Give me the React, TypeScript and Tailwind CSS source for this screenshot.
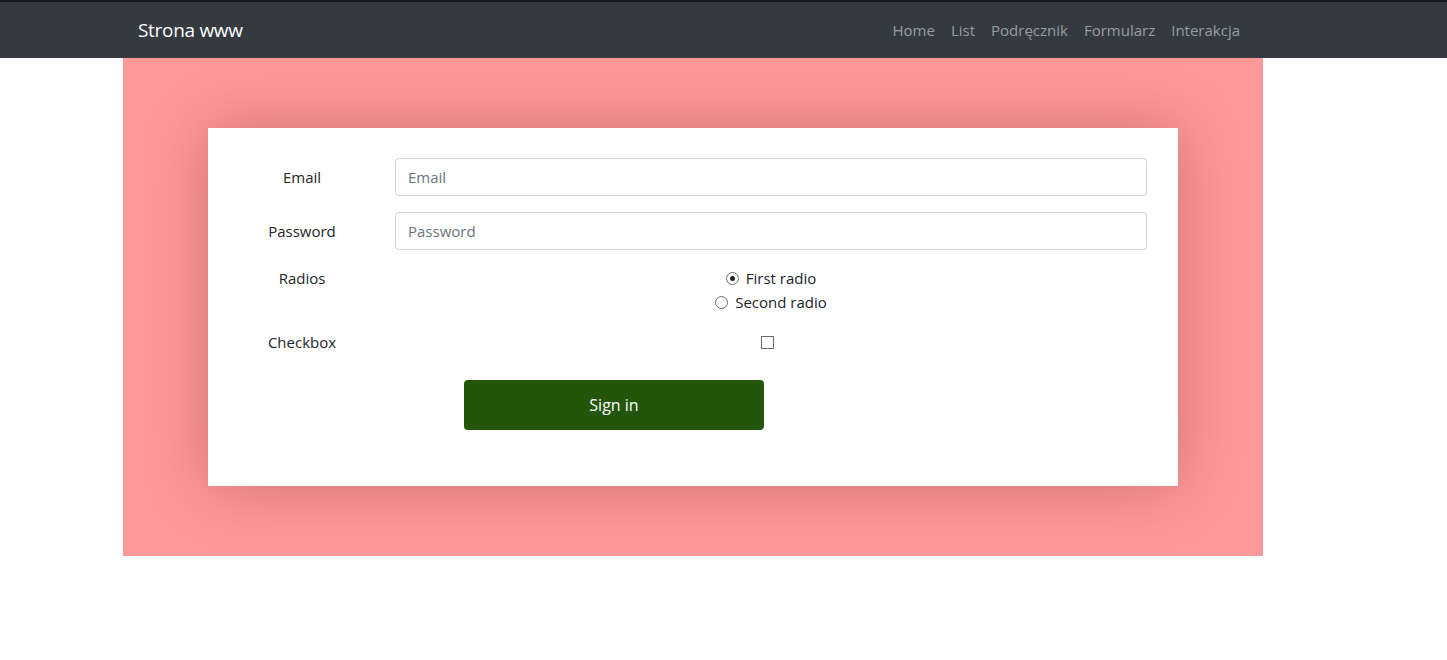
import { useState } from "react";

const links = ["Home", "List", "Podręcznik", "Formularz", "Interakcja"];

function Radio({ checked, label, onClick }: { checked: boolean; label: string; onClick: () => void }) {
  return (
    <label className="flex items-center gap-[7px] cursor-pointer" onClick={onClick}>
      <span className="w-[13px] h-[13px] rounded-full border border-[#6b6b6b] bg-white flex items-center justify-center">
        {checked && <span className="w-[5px] h-[5px] rounded-full bg-[#222]" />}
      </span>
      <span>{label}</span>
    </label>
  );
}

export default function App() {
  const [radio, setRadio] = useState(0);
  const [checked, setChecked] = useState(false);

  return (
    <div className="min-h-[660px] bg-white text-[#212529] text-[16px]" style={{ fontFamily: '"Open Sans", "Noto Sans", sans-serif' }}>
      {/* Navbar */}
      <nav className="h-[58px] bg-[#343a40] border-t-2 border-[#18191c]">
        <div className="ml-[123px] w-[1140px] h-full px-[15px] flex items-center justify-between">
          <span className="text-white text-[19px] tracking-[-0.3px]">Strona www</span>
          <ul className="flex items-center">
            {links.map((l) => (
              <li key={l} className="px-[8px] text-[15px] text-[#9a9da0]">
                {l}
              </li>
            ))}
          </ul>
        </div>
      </nav>

      {/* Pink section */}
      <section className="ml-[123px] w-[1140px] h-[498px] bg-[#ff9999] pt-[70px] px-[85px]">
        <div className="bg-white w-[970px] h-[358px] shadow-[0_0_60px_rgba(80,0,0,0.28)] pt-[30px] px-[31px]">
          {/* Email */}
          <div className="flex items-center h-[38px]">
            <div className="w-[156px] text-center text-[15px] pr-[30px]">Email</div>
            <input
              className="flex-1 h-[38px] border border-[#ced4da] rounded-[4px] px-[12px] text-[15px] outline-none placeholder:text-[#6c757d]"
              placeholder="Email"
            />
          </div>
          {/* Password */}
          <div className="flex items-center h-[38px] mt-[16px]">
            <div className="w-[156px] text-center text-[15px] pr-[30px]">Password</div>
            <input
              type="password"
              className="flex-1 h-[38px] border border-[#ced4da] rounded-[4px] px-[12px] text-[15px] outline-none placeholder:text-[#6c757d]"
              placeholder="Password"
            />
          </div>
          {/* Radios */}
          <div className="flex items-start mt-[16px]">
            <div className="w-[156px] text-center text-[15px] pr-[30px] leading-[24px]">Radios</div>
            <div className="flex-1 flex flex-col items-center text-[15px] leading-[24px]">
              <Radio checked={radio === 0} label="First radio" onClick={() => setRadio(0)} />
              <Radio checked={radio === 1} label="Second radio" onClick={() => setRadio(1)} />
            </div>
          </div>
          {/* Checkbox */}
          <div className="flex items-center mt-[16px] h-[24px]">
            <div className="w-[156px] text-center text-[15px] pr-[30px]">Checkbox</div>
            <div className="flex-1 flex justify-center pr-[8px]">
              <span
                onClick={() => setChecked(!checked)}
                className="w-[13px] h-[13px] border border-[#6b6b6b] bg-white flex items-center justify-center text-[10px] leading-none cursor-pointer"
              >
                {checked ? "✓" : ""}
              </span>
            </div>
          </div>
          {/* Button */}
          <div className="mt-[26px] ml-[225px]">
            <button className="w-[300px] h-[50px] rounded-[4px] bg-[#23550a] text-white text-[16px]">Sign in</button>
          </div>
        </div>
      </section>
    </div>
  );
}
